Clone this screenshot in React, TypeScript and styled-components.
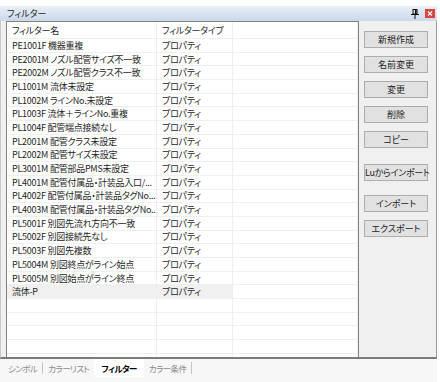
import styled, { createGlobalStyle } from "styled-components";

const GlobalStyle = createGlobalStyle`
  body {
    margin: 0;
    background: #ffffff;
    font-family: "Noto Sans CJK JP", "Noto Sans", sans-serif;
  }
`;

const Window = styled.div`
  width: 437px;
  height: 382px;
  padding-top: 6px;
  box-sizing: border-box;
  display: flex;
  flex-direction: column;
  font-size: 9px;
  font-feature-settings: "palt";
  color: #1e1e1e;
`;

const TitleBar = styled.div`
  height: 15px;
  display: flex;
  align-items: center;
  padding: 0 2px 0 7px;
  background: linear-gradient(#e8eff8, #cbd8e9);
`;

const Title = styled.span`
  flex: 1;
  line-height: 15px;
`;

const PinBox = styled.div`
  width: 8px;
  height: 10px;
  margin-right: 6px;
  display: flex;
`;

const CloseBox = styled.div`
  width: 10px;
  height: 9px;
  background: #d9453f;
  display: flex;
  align-items: center;
  justify-content: center;
`;

const Body = styled.div`
  height: 336px;
  display: flex;
  background: #f0f0f0;
  border-left: 1px solid #c8c8c8;
  border-right: 1px solid #9a9a9a;
  border-bottom: 2px solid #7c7c7c;
`;

const ListBox = styled.div`
  margin-left: 5px;
  width: 353px;
  box-sizing: border-box;
  border: 1px solid #828282;
  border-bottom: none;
  background: #ffffff;
  overflow: hidden;
`;

const Row = styled.div<{ $header?: boolean }>`
  display: grid;
  grid-template-columns: 150px 76px 1fr;
  height: ${(p) => (p.$header ? "17px" : "13.7px")};
  border-bottom: 1px solid #efefef;
  box-sizing: border-box;
`;

const Cell = styled.div<{ $selected?: boolean }>`
  padding-left: 5px;
  border-right: 1px solid #efefef;
  background: ${(p) => (p.$selected ? "#f0f0f0" : "transparent")};
  white-space: nowrap;
  letter-spacing: -0.25px;
  overflow: hidden;
  display: flex;
  align-items: center;
  min-width: 0;
`;

const ButtonColumn = styled.div`
  display: flex;
  flex-direction: column;
  padding: 10px 0 0 5px;
`;

const ActionButton = styled.button<{ $gap: number; $tight?: boolean }>`
  margin-top: ${(p) => p.$gap}px;
  width: 64px;
  height: 17px;
  padding: 0;
  background: #e1e1e1;
  border: 1px solid #adadad;
  font-family: inherit;
  font-size: 9px;
  font-feature-settings: "palt";
  color: #222222;
  white-space: nowrap;
  letter-spacing: ${(p) => (p.$tight ? "-0.3px" : "0")};
`;

const TabStrip = styled.div`
  height: 23px;
  display: flex;
  align-items: flex-start;
  padding-left: 3px;
  background: #f7f7f7;
  font-size: 8.5px;
  letter-spacing: -0.6px;
`;

const Tab = styled.div<{ $active?: boolean }>`
  height: 18px;
  display: flex;
  align-items: center;
  color: ${(p) => (p.$active ? "#000000" : "#8a8a8a")};
  font-weight: ${(p) => (p.$active ? 700 : 400)};
  background: ${(p) => (p.$active ? "#ffffff" : "transparent")};
  padding: ${(p) => (p.$active ? "0 7px" : "0 5px")};
`;

const TabSep = styled.div`
  width: 1px;
  height: 12px;
  margin-top: 3px;
  background: #c4c4c4;
`;

const filters = [
  "PE1001F 機器重複",
  "PE2001M ノズル配管サイズ不一致",
  "PE2002M ノズル配管クラス不一致",
  "PL1001M 流体未設定",
  "PL1002M ラインNo.未設定",
  "PL1003F 流体＋ラインNo.重複",
  "PL1004F 配管端点接続なし",
  "PL2001M 配管クラス未設定",
  "PL2002M 配管サイズ未設定",
  "PL3001M 配管部品PMS未設定",
  "PL4001M 配管付属品・計装品入口/...",
  "PL4002F 配管付属品・計装品タグNo...",
  "PL4003M 配管付属品・計装品タグNo...",
  "PL5001F 別図先流れ方向不一致",
  "PL5002F 別図接続先なし",
  "PL5003F 別図先複数",
  "PL5004M 別図終点がライン始点",
  "PL5005M 別図始点がライン終点",
  "流体-P",
];

const buttons: [string, number][] = [
  ["新規作成", 0],
  ["名前変更", 8],
  ["変更", 8],
  ["削除", 8],
  ["コピー", 8],
  ["Luからインポート", 16],
  ["インポート", 14],
  ["エクスポート", 8],
];

const PinIcon = () => (
  <svg width="8" height="10" viewBox="0 0 8 10">
    <rect x="2" y="0.5" width="4" height="4.5" fill="none" stroke="#111" strokeWidth="1" />
    <rect x="4" y="1" width="1.5" height="4" fill="#111" />
    <rect x="0" y="5" width="8" height="1" fill="#111" />
    <rect x="3.5" y="6" width="1" height="4" fill="#111" />
  </svg>
);

const CloseIcon = () => (
  <svg width="6" height="5" viewBox="0 0 6 5">
    <path d="M1 0.5 L5 4.5 M5 0.5 L1 4.5" stroke="#fff" strokeWidth="1.1" />
  </svg>
);

export default function App() {
  return (
    <>
      <GlobalStyle />
      <Window>
        <TitleBar>
          <Title>フィルター</Title>
          <PinBox>
            <PinIcon />
          </PinBox>
          <CloseBox>
            <CloseIcon />
          </CloseBox>
        </TitleBar>
        <Body>
          <ListBox>
            <Row $header>
              <Cell>フィルター名</Cell>
              <Cell>フィルタータイプ</Cell>
              <Cell />
            </Row>
            {filters.map((name, i) => {
              const selected = i === filters.length - 1;
              return (
                <Row key={name}>
                  <Cell $selected={selected}>{name}</Cell>
                  <Cell $selected={selected}>プロパティ</Cell>
                  <Cell />
                </Row>
              );
            })}
            {[0, 1, 2, 3, 4].map((i) => (
              <Row key={"empty" + i}>
                <Cell />
                <Cell />
                <Cell />
              </Row>
            ))}
          </ListBox>
          <ButtonColumn>
            {buttons.map(([label, gap]) => (
              <ActionButton key={label} $gap={gap} $tight={label.length > 6}>
                {label}
              </ActionButton>
            ))}
          </ButtonColumn>
        </Body>
        <TabStrip>
          <Tab>シンボル</Tab>
          <TabSep />
          <Tab>カラーリスト</Tab>
          <Tab $active>フィルター</Tab>
          <Tab>カラー条件</Tab>
          <TabSep />
        </TabStrip>
      </Window>
    </>
  );
}
